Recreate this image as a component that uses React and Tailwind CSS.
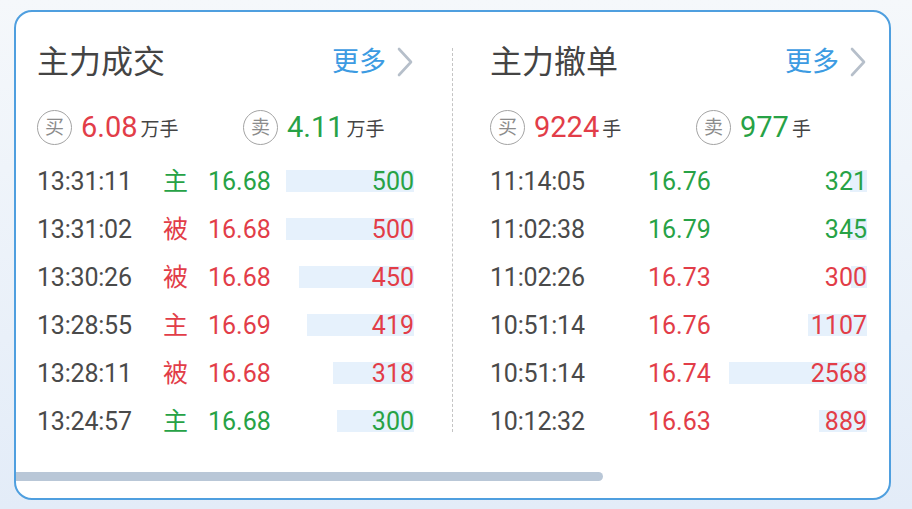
const RED = 'text-[#e23d48]';
const GREEN = 'text-[#27a246]';

const deals = [
  { time: '13:31:11', side: '主', up: false, price: '16.68', qty: 500 },
  { time: '13:31:02', side: '被', up: true, price: '16.68', qty: 500 },
  { time: '13:30:26', side: '被', up: true, price: '16.68', qty: 450 },
  { time: '13:28:55', side: '主', up: true, price: '16.69', qty: 419 },
  { time: '13:28:11', side: '被', up: true, price: '16.68', qty: 318 },
  { time: '13:24:57', side: '主', up: false, price: '16.68', qty: 300 },
];

const cancels = [
  { time: '11:14:05', up: false, price: '16.76', qty: 321 },
  { time: '11:02:38', up: false, price: '16.79', qty: 345 },
  { time: '11:02:26', up: true, price: '16.73', qty: 300 },
  { time: '10:51:14', up: true, price: '16.76', qty: 1107 },
  { time: '10:51:14', up: true, price: '16.74', qty: 2568 },
  { time: '10:12:32', up: true, price: '16.63', qty: 889 },
];

function Circle({ ch }) {
  return (
    <span className="flex h-[35px] w-[35px] shrink-0 items-center justify-center rounded-full border-[1.5px] border-[#a3a3a3] text-[19px] leading-none text-[#8c8c8c]">
      {ch}
    </span>
  );
}

function Header({ title }) {
  return (
    <div className="flex h-11 items-center justify-between">
      <span className="text-[32px] leading-none text-[#444]">{title}</span>
      <span className="flex items-center">
        <span className="text-[27px] leading-none text-[#3c9be2]">更多</span>
        <svg width="18" height="30" viewBox="0 0 18 30" className="ml-[10px]">
          <polyline points="3,2 15,15 3,28" fill="none" stroke="#b6bfca" strokeWidth="2.6" strokeLinecap="round" strokeLinejoin="round" />
        </svg>
      </span>
    </div>
  );
}

function Stats({ buy, sell, unit }) {
  return (
    <div className="mt-[22px] flex h-[42px] items-center">
      <div className="flex w-[206px] items-center">
        <Circle ch="买" />
        <span className={`ml-[9px] text-[29px] leading-none ${RED}`}>{buy}</span>
        <span className="ml-[3px] mt-[4px] text-[19px] leading-none text-[#444]">{unit}</span>
      </div>
      <div className="flex items-center">
        <Circle ch="卖" />
        <span className={`ml-[9px] text-[29px] leading-none ${GREEN}`}>{sell}</span>
        <span className="ml-[3px] mt-[4px] text-[19px] leading-none text-[#444]">{unit}</span>
      </div>
    </div>
  );
}

function Qty({ qty, max, full, color }) {
  return (
    <div className="relative flex h-12 flex-1 items-center justify-end">
      <div
        className="absolute right-0 top-[13px] h-[22px] bg-[#e6f1fc]"
        style={{ width: Math.round((qty / max) * full) }}
      />
      <span className={`relative text-[25px] leading-none ${color}`}>{qty}</span>
    </div>
  );
}

export default function App() {
  return (
    <div
      className="min-h-[509px] w-[912px] bg-gradient-to-b from-[#f5f8fb] to-[#e3ecf8] pl-[14px] pt-[10px]"
      style={{ fontFamily: 'Roboto, "Noto Sans CJK SC", sans-serif' }}
    >
      <div className="flex h-[490px] w-[877px] flex-col overflow-hidden rounded-[18px] border-2 border-[#4f9fdf] bg-white">
        <div className="flex pl-[21px] pr-[22px] pt-[28px]">
          <div className="w-[377px]">
            <Header title="主力成交" />
            <Stats buy="6.08" sell="4.11" unit="万手" />
            <div className="mt-[9px]">
              {deals.map((d, i) => (
                <div key={i} className="flex h-12 items-center">
                  <span className="w-[126px] text-[25px] leading-none tracking-[-0.2px] text-[#4a4a4a]">{d.time}</span>
                  <span className={`w-[45px] text-[25px] leading-none ${d.up ? RED : GREEN}`}>{d.side}</span>
                  <span className={`text-[25px] leading-none ${d.up ? RED : GREEN}`}>{d.price}</span>
                  <Qty qty={d.qty} max={500} full={128} color={d.up ? RED : GREEN} />
                </div>
              ))}
            </div>
          </div>
          <div className="mb-[13px] ml-[38px] mr-[37px] mt-2 w-0 border-l border-dashed border-[#c4c4c4]" />
          <div className="w-[377px]">
            <Header title="主力撤单" />
            <Stats buy="9224" sell="977" unit="手" />
            <div className="mt-[9px]">
              {cancels.map((d, i) => (
                <div key={i} className="flex h-12 items-center">
                  <span className="w-[158px] text-[25px] leading-none tracking-[-0.2px] text-[#4a4a4a]">{d.time}</span>
                  <span className={`text-[25px] leading-none ${d.up ? RED : GREEN}`}>{d.price}</span>
                  <Qty qty={d.qty} max={2568} full={138} color={d.up ? RED : GREEN} />
                </div>
              ))}
            </div>
          </div>
        </div>
        <div className="mt-[27px] h-[9px] w-[587px] rounded-r-full bg-[#b9c7d7]" />
      </div>
    </div>
  );
}
